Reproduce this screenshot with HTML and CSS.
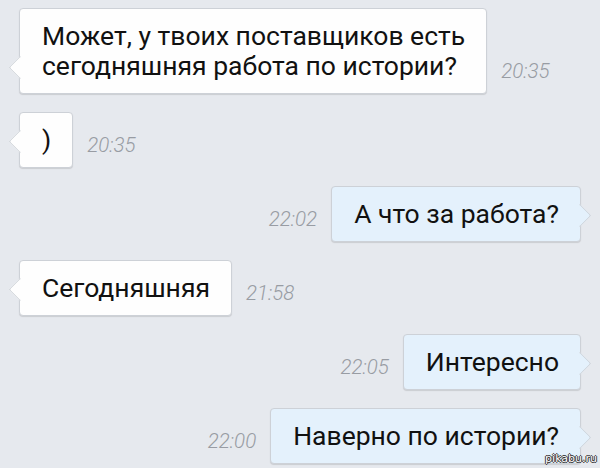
FILE: index.html
```html
<!DOCTYPE html>
<html lang="ru">
<head>
  <meta charset="UTF-8">
  <meta name="viewport" content="width=device-width, initial-scale=1.0">
  <title>Чат</title>
  <link rel="stylesheet" href="styles.css">
</head>
<body>

  <div class="chat">
    <div class="msg in">
      <div class="bubble">Может, у твоих поставщиков есть<br>сегодняшняя работа по истории?</div>
      <span class="time">20:35</span>
    </div>

    <div class="msg in">
      <div class="bubble">)</div>
      <span class="time">20:35</span>
    </div>

    <div class="msg out">
      <span class="time">22:02</span>
      <div class="bubble">А что за работа?</div>
    </div>

    <div class="msg in">
      <div class="bubble">Сегодняшняя</div>
      <span class="time">21:58</span>
    </div>

    <div class="msg out">
      <span class="time">22:05</span>
      <div class="bubble">Интересно</div>
    </div>

    <div class="msg out">
      <span class="time">22:00</span>
      <div class="bubble">Наверно по истории?</div>
    </div>
  </div>

  <div class="watermark">pikabu.ru</div>

</body>
</html>
```

FILE: styles.css
```css
body {
  margin: 0;
  padding: 0;
  background: #e6e9ee;
  font-family: Roboto, "Noto Sans", sans-serif;
  color: #111;
  height: 468px;
  overflow: hidden;
  position: relative;
}

.chat {
  display: flex;
  flex-direction: column;
  gap: 18px;
  padding: 8px 19px;
}

.msg {
  display: flex;
  align-items: flex-end;
  gap: 14px;
}

.msg.out {
  justify-content: flex-end;
}

/* bubble with a little tail */
.bubble {
  position: relative;
  background: #fefefe;
  border: 1px solid #cdd1d7;
  border-radius: 4px;
  box-shadow: 0 1px 1px rgba(0, 0, 0, 0.12);
  padding: 12px 21px 12px 22px;
  font-size: 26.5px;
  line-height: 30px;
  white-space: nowrap;
}

.bubble::before {
  content: "";
  position: absolute;
  bottom: 17px;
  width: 15px;
  height: 15px;
  background: inherit;
  border: 1px solid #cdd1d7;
  border-radius: 2px;
  transform: rotate(45deg);
}

.in .bubble::before {
  left: -8px;
  border-top-color: transparent;
  border-right-color: transparent;
}

.out .bubble {
  background: #e4f1fc;
}

.out .bubble::before {
  right: -8px;
  border-bottom-color: transparent;
  border-left-color: transparent;
}

.time {
  font-size: 20.5px;
  line-height: 24px;
  font-style: italic;
  font-weight: 300;
  color: #989ca3;
  margin-bottom: 11px;
}

.watermark {
  position: absolute;
  right: 3px;
  bottom: 4px;
  font-family: "DejaVu Sans", sans-serif;
  font-size: 11px;
  line-height: 1;
  color: #fff;
  text-shadow: 1px 0 0 #333, -1px 0 0 #333, 0 1px 0 #333, 0 -1px 0 #333;
}
```
